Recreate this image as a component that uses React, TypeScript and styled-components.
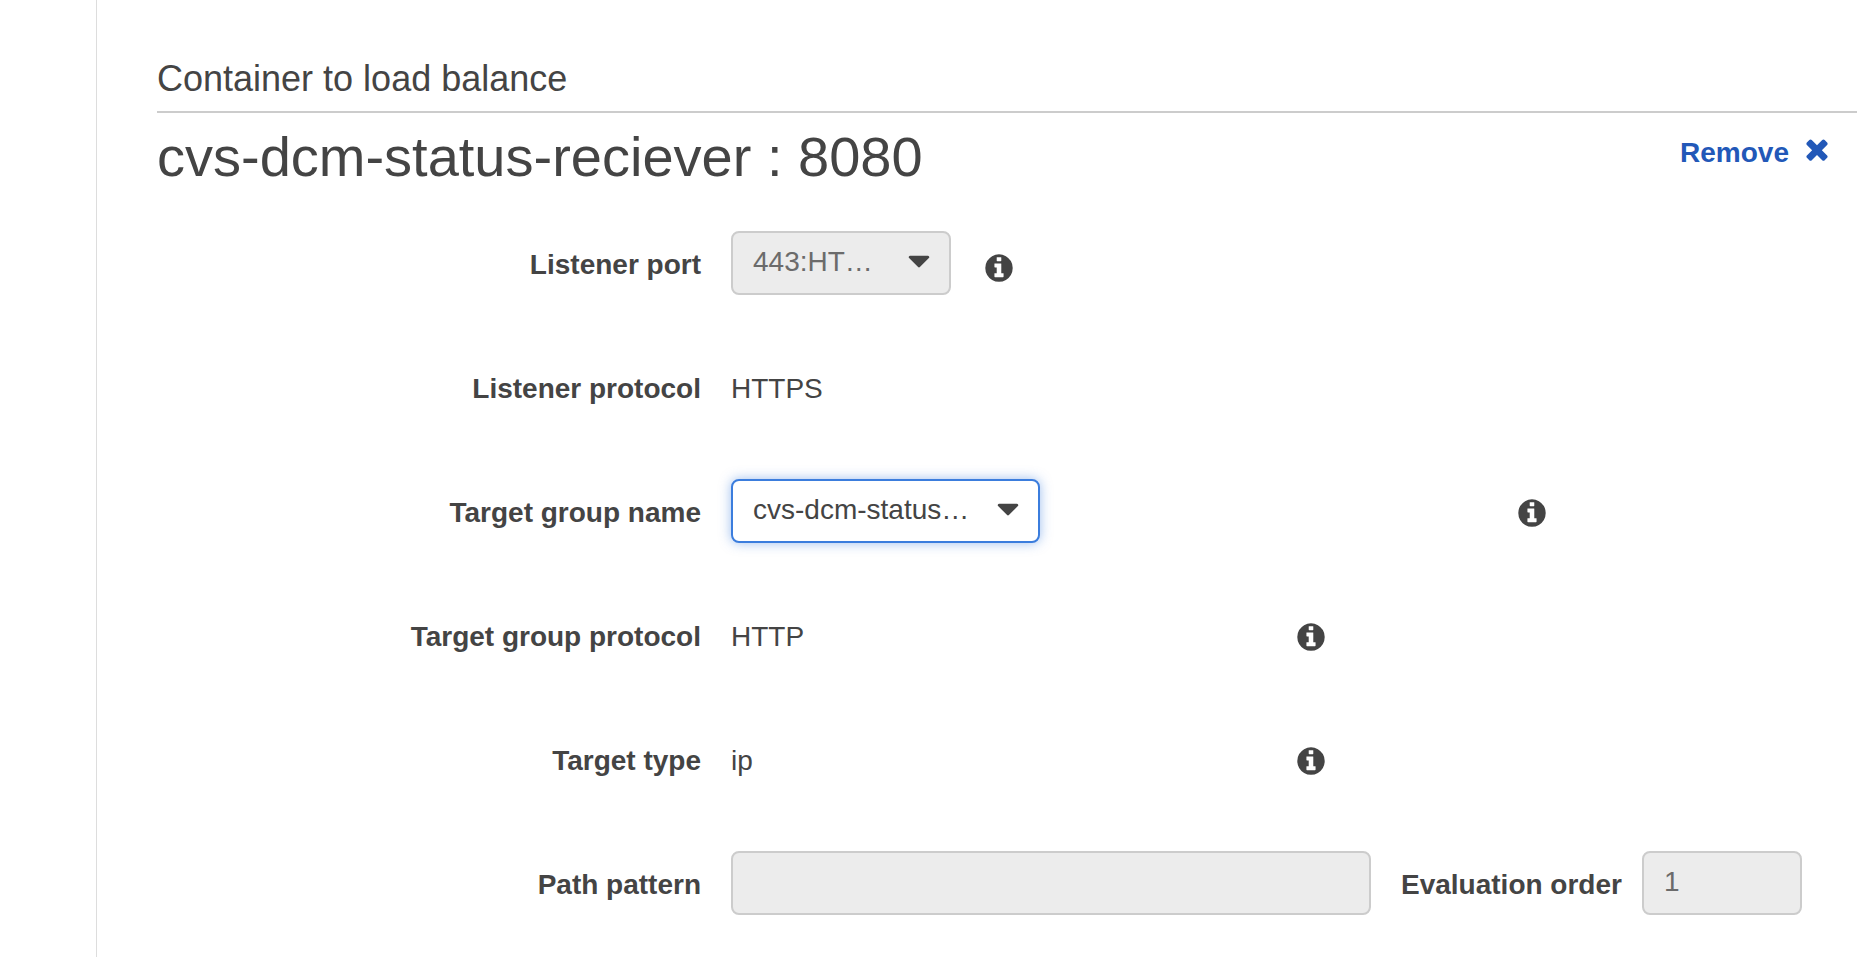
import React from "react";
import styled, { createGlobalStyle, css } from "styled-components";

const ink = "#444";
const line = "#ccc";
const blue = "#2258b8";

const GlobalStyle = createGlobalStyle`
  *, *::before, *::after { box-sizing: border-box; }
  body {
    margin: 0;
    background: #fff;
    color: ${ink};
    font-family: "Liberation Sans", Arial, Helvetica, sans-serif;
    font-size: 28px;
    line-height: 40px;
  }
`;

const Page = styled.div`
  display: flex;
  min-height: 100vh;
  padding-left: 96px;
`;

const Panel = styled.main`
  flex: 1;
  min-width: 0;
  padding: 57px 0 24px 60px;
  border-left: 1px solid #ddd;
`;

const SectionTitle = styled.h2`
  margin: 0;
  padding-bottom: 10px;
  border-bottom: 2px solid ${line};
  font-size: 36px;
  font-weight: 400;
  line-height: 44px;
`;

const ContainerHeader = styled.header`
  display: flex;
  align-items: flex-start;
  justify-content: space-between;
  padding: 12px 24px 0 0;
`;

const ContainerName = styled.h1`
  margin: 0;
  font-size: 56px;
  font-weight: 400;
  line-height: 64px;
`;

const RemoveButton = styled.button`
  display: flex;
  align-items: flex-start;
  gap: 12px;
  margin-top: 8px;
  padding: 0;
  border: 0;
  background: none;
  color: ${blue};
  font: inherit;
  font-weight: 700;
  cursor: pointer;
`;

const Form = styled.form`
  display: grid;
  gap: 60px;
  padding-top: 42px;
`;

const Row = styled.div`
  display: grid;
  grid-template-columns: 32% 1fr;
  column-gap: 30px;
  align-items: center;
  min-height: 64px;
`;

const labelText = css`
  padding-top: 4px;
  font-weight: 700;
  white-space: nowrap;
`;

const Label = styled.label`
  ${labelText}
  text-align: right;
`;

const InlineLabel = styled.label`
  ${labelText}
  margin: 0 20px 0 30px;
`;

const Field = styled.div`
  display: flex;
  align-items: center;
`;

const Value = styled.output<{ $width: number }>`
  width: ${(p) => p.$width}px;
  padding-top: 4px;
`;

const control = css`
  height: 64px;
  padding: 0 20px 2px;
  border: 2px solid ${line};
  border-radius: 8px;
  background: #fff;
  color: ${ink};
  font: inherit;

  &:disabled {
    background: #ececec;
    color: #6b6b6b;
    opacity: 1;
  }
`;

const TextInput = styled.input<{ $width: number }>`
  ${control}
  width: ${(p) => p.$width}px;
`;

const SelectBox = styled.div<{ $width: number; $after: number }>`
  position: relative;
  width: ${(p) => p.$width}px;
  margin-right: ${(p) => p.$after}px;
`;

const Select = styled.select<{ $active?: boolean }>`
  ${control}
  display: block;
  width: 100%;
  appearance: none;
  outline: none;
  ${(p) =>
    p.$active &&
    css`
      border-color: #3b7ddd;
      box-shadow: 0 0 12px rgba(59, 125, 221, 0.5);
    `}
`;

const Caret = styled.svg`
  position: absolute;
  top: 12px;
  right: 14px;
  pointer-events: none;
`;

const InfoButton = styled.button<{ $low?: boolean }>`
  display: flex;
  padding: ${(p) => (p.$low ? "10px 0 0" : "4px 0 0")};
  border: 0;
  background: none;
  color: ${ink};
  cursor: pointer;
`;

function CaretIcon() {
  return (
    <Caret width="36" height="36" viewBox="0 0 1792 1792" fill={ink} aria-hidden="true">
      <path d="M1408 704q0 26-19 45l-448 448q-19 19-45 19t-45-19l-448-448q-19-19-19-45t19-45 45-19h896q26 0 45 19t19 45z" />
    </Caret>
  );
}

function CloseIcon() {
  return (
    <svg width="32" height="32" viewBox="0 0 1792 1792" fill="currentColor" aria-hidden="true">
      <path d="M1490 1322q0 40-28 68l-136 136q-28 28-68 28t-68-28l-294-294-294 294q-28 28-68 28t-68-28l-136-136q-28-28-28-68t28-68l294-294-294-294q-28-28-28-68t28-68l136-136q28-28 68-28t68 28l294 294 294-294q28-28 68-28t68 28l136 136q28 28 28 68t-28 68l-294 294 294 294q28 28 28 68z" />
    </svg>
  );
}

function Info({ topic, low }: { topic: string; low?: boolean }) {
  return (
    <InfoButton type="button" $low={low} aria-label={`About ${topic}`}>
      <svg width="32" height="32" viewBox="0 0 1792 1792" fill="currentColor" aria-hidden="true">
        <path d="M1152 1376v-160q0-14-9-23t-23-9h-96v-512q0-14-9-23t-23-9h-320q-14 0-23 9t-9 23v160q0 14 9 23t23 9h96v320h-96q-14 0-23 9t-9 23v160q0 14 9 23t23 9h448q14 0 23-9t9-23zm-128-896v-160q0-14-9-23t-23-9h-192q-14 0-23 9t-9 23v160q0 14 9 23t23 9h192q14 0 23-9t9-23zm640 416q0 209-103 385.5t-279.5 279.5-385.5 103-385.5-103-279.5-279.5-103-385.5 103-385.5 279.5-279.5 385.5-103 385.5 103 279.5 279.5 103 385.5z" />
      </svg>
    </InfoButton>
  );
}

export default function App() {
  return (
    <Page>
      <GlobalStyle />
      <Panel>
        <SectionTitle>Container to load balance</SectionTitle>
        <ContainerHeader>
          <ContainerName>cvs-dcm-status-reciever : 8080</ContainerName>
          <RemoveButton type="button">
            Remove
            <CloseIcon />
          </RemoveButton>
        </ContainerHeader>

        <Form>
          <Row>
            <Label htmlFor="listener-port">Listener port</Label>
            <Field>
              <SelectBox $width={220} $after={32}>
                <Select id="listener-port" disabled>
                  <option>443:HT…</option>
                </Select>
                <CaretIcon />
              </SelectBox>
              <Info topic="listener port" low />
            </Field>
          </Row>

          <Row>
            <Label htmlFor="listener-protocol">Listener protocol</Label>
            <Field>
              <Value id="listener-protocol" $width={564}>HTTPS</Value>
            </Field>
          </Row>

          <Row>
            <Label htmlFor="target-group">Target group name</Label>
            <Field>
              <SelectBox $width={309} $after={476}>
                <Select id="target-group" $active>
                  <option>cvs-dcm-status…</option>
                </Select>
                <CaretIcon />
              </SelectBox>
              <Info topic="target group name" />
            </Field>
          </Row>

          <Row>
            <Label htmlFor="target-protocol">Target group protocol</Label>
            <Field>
              <Value id="target-protocol" $width={564}>HTTP</Value>
              <Info topic="target group protocol" />
            </Field>
          </Row>

          <Row>
            <Label htmlFor="target-type">Target type</Label>
            <Field>
              <Value id="target-type" $width={564}>ip</Value>
              <Info topic="target type" />
            </Field>
          </Row>

          <Row>
            <Label htmlFor="path-pattern">Path pattern</Label>
            <Field>
              <TextInput id="path-pattern" type="text" $width={640} disabled />
              <InlineLabel htmlFor="evaluation-order">Evaluation order</InlineLabel>
              <TextInput id="evaluation-order" type="text" $width={160} defaultValue="1" disabled />
            </Field>
          </Row>
        </Form>
      </Panel>
    </Page>
  );
}
